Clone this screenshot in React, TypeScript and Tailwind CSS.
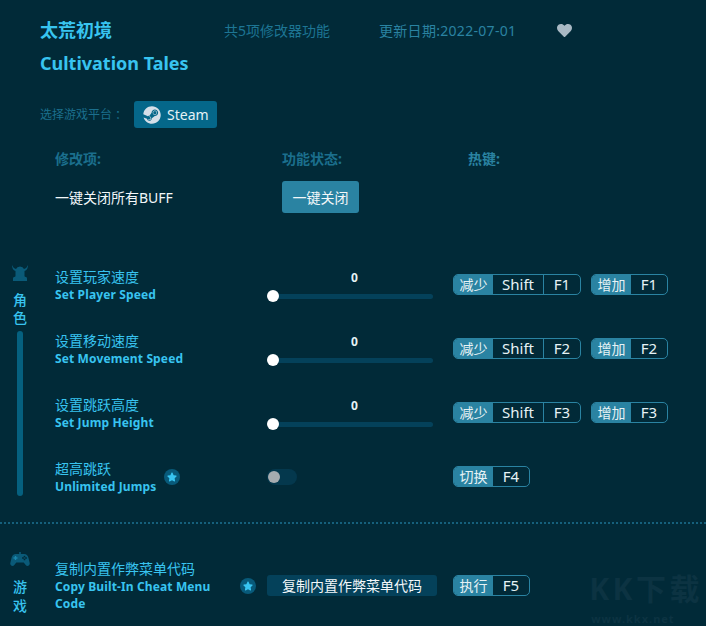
import { FaStar, FaHeart, FaSteam } from 'react-icons/fa'

function Hotkey({ label, keys }: { label: string; keys: string[] }) {
  return (
    <div className="flex h-[21px] rounded-[5px] border border-[#2a83a2] overflow-hidden text-[14px] text-[#e6f2f5]">
      <span className="w-[39px] bg-[#2a83a2] flex items-center justify-center">{label}</span>
      {keys.map((k, i) => (
        <span
          key={k}
          className={
            i < keys.length - 1
              ? 'w-[51px] flex items-center justify-center border-r border-[#2a83a2] text-[15px]'
              : 'w-[36px] flex items-center justify-center text-[15px]'
          }
        >
          {k}
        </span>
      ))}
    </div>
  )
}

function Star() {
  return (
    <span className="w-4 h-4 rounded-full bg-[#085a7a] flex items-center justify-center text-[#38c4f0] text-[10px]">
      <FaStar />
    </span>
  )
}

function Slider() {
  return (
    <div className="w-[166px] flex flex-col -mt-[2px]">
      <span className="text-center text-[12px] leading-[16px] font-bold text-[#e6f2f5] pl-[9px]">0</span>
      <div className="relative h-[5px] mt-[8px] ml-[6px] rounded-full bg-[#04415a]">
        <span className="absolute -left-[6px] -top-[3.5px] w-[12px] h-[12px] rounded-full bg-white" />
      </div>
    </div>
  )
}

function Names({ zh, en, width }: { zh: string; en: string; width: string }) {
  return (
    <div className={`${width} text-[#38c4f0]`}>
      <div className="text-[14px] leading-[18px]">{zh}</div>
      <div className="font-bold text-[12px] leading-[17px] tracking-[0.13px]">{en}</div>
    </div>
  )
}

function SliderRow({ zh, en, n }: { zh: string; en: string; n: number }) {
  return (
    <div className="flex items-center h-[64px]">
      <Names zh={zh} en={en} width="w-[212px]" />
      <Slider />
      <div className="flex gap-[10px] ml-[20px] -mt-[2px]">
        <Hotkey label="减少" keys={['Shift', `F${n}`]} />
        <Hotkey label="增加" keys={[`F${n}`]} />
      </div>
    </div>
  )
}

export default function App() {
  return (
    <div
      className="relative w-[706px] h-[626px] overflow-hidden bg-[#012a38] text-[14px]"
      style={{ fontFamily: '"Noto Sans", "Noto Sans CJK SC", sans-serif' }}
    >
      {/* 标题 */}
      <div className="pl-[40px] pt-[17px]">
        <div className="flex items-center h-[26px]">
          <h1 className="w-[184px] text-[18px] font-bold text-[#38c4f0]">太荒初境</h1>
          <span className="w-[155px] text-[14px] text-[#1d7594]">共5项修改器功能</span>
          <span className="w-[178px] text-[14px] tracking-[0.3px] text-[#2a83a2]">更新日期:2022-07-01</span>
          <FaHeart className="text-[#a9b9c4] text-[15px]" />
        </div>
        <h2 className="mt-[7px] text-[18px] leading-[26px] font-bold text-[#38c4f0]">Cultivation Tales</h2>

        <div className="flex items-center mt-[25px]">
          <span className="w-[94px] text-[12px] text-[#1b6f8d]">选择游戏平台 ：</span>
          <div className="flex items-center gap-[6px] w-[83px] h-[27px] pl-[9px] rounded-[3px] bg-[#05678a] text-[14px] text-[#e6f2f5]">
            <FaSteam className="text-[#d5dfe9] text-[18px]" />
            Steam
          </div>
        </div>
      </div>

      {/* 表头 */}
      <div className="flex pl-[55px] mt-[19px] h-[22px] items-center text-[14px] font-bold text-[#1b6f8d]">
        <span className="w-[227px]">修改项:</span>
        <span className="w-[186px]">功能状态:</span>
        <span className="text-[#2a83a2]">热键:</span>
      </div>

      <div className="flex items-center pl-[55px] mt-[12px] h-[32px]">
        <span className="w-[227px] text-[14px] text-[#f2f7f9]">一键关闭所有BUFF</span>
        <button className="w-[77px] h-[32px] rounded-[3px] bg-[#2a83a2] text-[14px] text-[#f2f7f9]">一键关闭</button>
      </div>

      {/* 角色 */}
      <div className="flex mt-[40px]">
        <div className="w-[55px] flex flex-col items-start pl-[12px] pt-[12px]">
          <svg viewBox="0 0 16 16" className="w-[16px] h-[16px] text-[#0a5a78]" fill="currentColor">
            <path d="M0 0 Q1 3 4 4 Q5 1.5 8 1.5 Q11 1.5 12 4 Q15 3 16 0 Q16 5 12.5 6 L12.5 11 Q12.5 12 14 12 Q15 12 15 13.5 L15 16 L1 16 L1 13.5 Q1 12 2 12 Q3.5 12 3.5 11 L3.5 6 Q0 5 0 0 Z" />
          </svg>
          <span className="mt-[10px] text-[14px] font-medium leading-[18px] text-[#38c4f0] w-[16px] text-center">角</span>
          <span className="text-[14px] font-medium leading-[18px] text-[#38c4f0] w-[16px] text-center">色</span>
          <span className="mt-[4px] ml-[5px] w-[6px] h-[165px] rounded-full bg-[#05607f]" />
        </div>
        <div>
          <SliderRow zh="设置玩家速度" en="Set Player Speed" n={1} />
          <SliderRow zh="设置移动速度" en="Set Movement Speed" n={2} />
          <SliderRow zh="设置跳跃高度" en="Set Jump Height" n={3} />
          <div className="flex items-center h-[64px]">
            <Names zh="超高跳跃" en="Unlimited Jumps" width="w-[109px]" />
            <span className="-mt-[1px]">
              <Star />
            </span>
            <span className="ml-[87px] -mt-[1px] w-[30px] h-[16px] rounded-full bg-[#04384d] flex items-center pl-[1px]">
              <span className="w-[12px] h-[12px] rounded-full bg-[#a6acb0]" />
            </span>
            <div className="ml-[156px] -mt-[1px]">
              <Hotkey label="切换" keys={['F4']} />
            </div>
          </div>
        </div>
      </div>

      <div className="mt-[13px] border-t-2 border-dotted border-[#15607c]" />

      {/* 游戏 */}
      <div className="flex mt-[28px]">
        <div className="w-[55px] pl-[10px] flex flex-col">
          <svg viewBox="0 0 20 15" className="w-[20px] h-[15px] text-[#0a5a78]" fill="currentColor">
            <path d="M9.2 0 h1.6 v2 h3.2 c2.5 0 3.8 1.5 4.5 4 l1.2 5 c.5 2.5 -2.5 4 -4 2 l-2 -2.5 h-7.4 l-2 2.5 c-1.5 2 -4.5 .5 -4 -2 l1.2 -5 c.7 -2.5 2 -4 4.5 -4 h3.2 z" />
            <path d="M4.8 4 h1.4 v1.3 h1.3 v1.4 h-1.3 v1.3 h-1.4 v-1.3 h-1.3 v-1.4 h1.3 z" fill="#1b86ab" />
            <circle cx="14.5" cy="4.6" r=".9" fill="#012a38" />
            <circle cx="14.5" cy="7.4" r=".9" fill="#012a38" />
            <circle cx="13" cy="6" r=".9" fill="#012a38" />
            <circle cx="16" cy="6" r=".9" fill="#012a38" />
          </svg>
          <span className="mt-[10px] w-[20px] text-center text-[14px] font-medium leading-[19px] text-[#38c4f0]">游</span>
          <span className="w-[20px] text-center text-[14px] font-medium leading-[19px] text-[#38c4f0]">戏</span>
        </div>
        <div className="flex items-center h-[55px] mt-[6px]">
          <Names zh="复制内置作弊菜单代码" en="Copy Built-In Cheat Menu Code" width="w-[185px]" />
          <Star />
          <button className="ml-[11px] -mt-[1px] w-[170px] h-[21px] rounded-[3px] bg-[#04415a] text-[14px] leading-[21px] text-[#f2f7f9]">
            复制内置作弊菜单代码
          </button>
          <div className="ml-[16px] -mt-[1px]">
            <Hotkey label="执行" keys={['F5']} />
          </div>
        </div>
      </div>

      {/* 水印 */}
      <div className="absolute right-[3px] bottom-[1px] flex flex-col items-start pointer-events-none">
        <span className="text-[30px] leading-[32px] font-bold text-[#0c3342] tracking-[3.5px]">KK下载</span>
        <span className="mt-[8px] pl-[2px] text-[11px] leading-[12px] font-bold text-[#0c3342] tracking-[1px]">www.kkx.net</span>
      </div>
    </div>
  )
}
